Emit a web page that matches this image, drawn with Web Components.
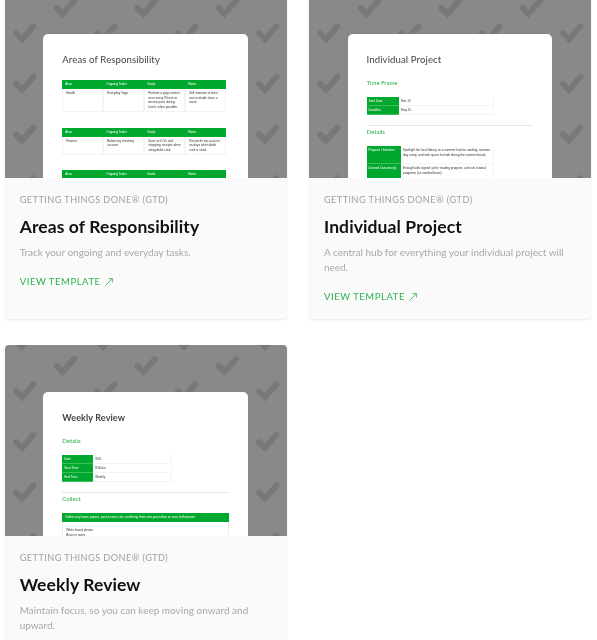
<!DOCTYPE html>
<html>
<head>
<meta charset="utf-8">
<title>Templates</title>
<style>
  html { overflow: hidden; }
  body { margin: 0; background: #fff; font-family: "Lato", "Liberation Sans", sans-serif; }
</style>
</head>
<body>
<template-grid>
  <template-card eyebrow="GETTING THINGS DONE® (GTD)" heading="Areas of Responsibility" text="Track your ongoing and everyday tasks.">
    <doc-sheet heading="Areas of Responsibility">
      <area-table style="margin-top:14px" cells="Health|Everyday Yoga|Perform a yoga stretch once every 90 min or do one pose during lunch, when possible.|Still maintain at least one in-studio class a week." height="23"></area-table>
      <area-table style="margin-top:15.500px" cells="Finance|Balancing checking account|Save as ICVs and shopping receipts when using debit card.|Reconcile my account on days when debit card is used." height="18"></area-table>
      <area-table style="margin-top:15px" cells="|||" height="10"></area-table>
    </doc-sheet>
  </template-card>
  <template-card eyebrow="GETTING THINGS DONE® (GTD)" heading="Individual Project" text="A central hub for everything your individual project will need.">
    <doc-sheet heading="Individual Project">
      <doc-heading style="margin-top:10.500px">Time Frame</doc-heading>
      <kv-table style="margin-top:9.500px" width="127" label="32.500" rows="Start Date|Mar 15;Deadline|May 15" row-height="9"></kv-table>
      <doc-rule style="margin-top:10px"></doc-rule>
      <doc-heading>Details</doc-heading>
      <kv-table style="margin-top:9px" width="127" label="34.500" rows="Purpose / Intention|Spotlight the local library as a summer hub for reading, summer day camp, and safe space for kids during the summer break.;Desired Outcome(s)|Enough kids signed up for reading program, art/craft, tutorial programs (as needed basis)" row-height="18"></kv-table>
    </doc-sheet>
  </template-card>
  <template-card eyebrow="GETTING THINGS DONE® (GTD)" heading="Weekly Review" text="Maintain focus, so you can keep moving onward and upward.">
    <doc-sheet heading="Weekly Review" bold>
      <doc-heading style="margin-top:10.500px">Details</doc-heading>
      <kv-table style="margin-top:9px" width="110" label="31" rows="Date|9/05;Start Time|8:30am;End Time|Weekly" row-height="9"></kv-table>
      <doc-rule style="margin-top:10.500px"></doc-rule>
      <doc-heading>Collect</doc-heading>
      <note-box style="margin-top:9px" title="Gather any loose papers, post-it notes, etc. and bring them into your inbox or scan to Evernote.">White board photos<br>Brain in notes</note-box>
    </doc-sheet>
  </template-card>
</template-grid>

<script>
class TemplateGrid extends HTMLElement {
  constructor() {
    super();
    this.attachShadow({ mode: 'open' });
    this.shadowRoot.innerHTML = `
      <style>
        :host {
          display: grid;
          grid-template-columns: 282px 282px;
          column-gap: 22.300px;
          row-gap: 26px;
          padding-left: 4.700px;
          margin-top: -13px;
        }
      </style>
      <slot></slot>
    `;
  }
}

class TemplateCard extends HTMLElement {
  constructor() {
    super();
    this.attachShadow({ mode: 'open' });
  }

  connectedCallback() {
    this.shadowRoot.innerHTML = `
      <style>
        :host {
          display: flex;
          flex-direction: column;
          height: 332px;
          background: #fafafa;
          border-radius: 4px;
          box-shadow: 0 1px 2px rgba(0, 0, 0, 0.1);
          overflow: hidden;
          font-family: "Lato", "Liberation Sans", sans-serif;
        }
        .thumb {
          position: relative;
          height: 191px;
          flex-shrink: 0;
          overflow: hidden;
          background: #88898b;
        }
        .blur {
          position: absolute;
          top: 0;
          left: 0;
          right: 0;
          bottom: 0;
          filter: blur(0.4px);
        }
        .blur svg {
          position: absolute;
          top: 0;
          left: 0;
          width: 100%;
          height: 100%;
        }
        .sheet-wrap {
          position: relative;
          padding: 47px 38.600px 0;
        }
        .body {
          padding: 15px 15px 0;
          filter: blur(0.3px);
        }
        .eyebrow {
          font-size: 9.200px;
          line-height: 14px;
          letter-spacing: 0.420px;
          color: #a0a0a0;
        }
        h2 {
          margin: 8px 0 0;
          font-size: 17.500px;
          line-height: 24px;
          font-weight: 700;
          color: #111;
          letter-spacing: 0.100px;
        }
        p {
          margin: 6px 0 0;
          font-size: 10px;
          line-height: 15px;
          color: #a8a8a8;
        }
        a {
          display: flex;
          align-items: center;
          gap: 4px;
          margin-top: 15px;
          font-size: 9.500px;
          line-height: 14px;
          letter-spacing: 0.550px;
          color: #2cb14c;
          text-decoration: none;
        }
      </style>
      <div class="thumb">
        <div class="blur">
          <svg aria-hidden="true">
            <defs>
              <pattern id="checks" width="81" height="50.600" patternUnits="userSpaceOnUse">
                <path d="M51.500 21l6 6L69 14" fill="none" stroke="#777879" stroke-width="6" stroke-linecap="round"/>
                <path d="M11 46.300l6 6L28.500 39.300M11 -4.300l6 6L28.500 -11.300" fill="none" stroke="#777879" stroke-width="6" stroke-linecap="round"/>
              </pattern>
            </defs>
            <rect width="100%" height="100%" fill="url(#checks)"/>
          </svg>
          <div class="sheet-wrap"><slot></slot></div>
        </div>
      </div>
      <div class="body">
        <div class="eyebrow">${this.getAttribute('eyebrow')}</div>
        <h2>${this.getAttribute('heading')}</h2>
        <p>${this.getAttribute('text')}</p>
        <a href="#">VIEW TEMPLATE
          <svg width="8" height="8" viewBox="0 0 8 8" fill="none" stroke="#2cb14c" stroke-width="0.800"><path d="M0.300 7.700L7.400 0.600M3.600 0.600h3.800v3.800"/></svg>
        </a>
      </div>
    `;
  }
}

class DocSheet extends HTMLElement {
  constructor() {
    super();
    this.attachShadow({ mode: 'open' });
  }

  connectedCallback() {
    const bold = this.hasAttribute('bold');
    this.shadowRoot.innerHTML = `
      <style>
        :host {
          display: block;
          height: 200px;
          padding: 19px 19px 0;
          box-sizing: border-box;
          background: #fff;
          border-radius: 5px;
          overflow: hidden;
        }
        .title {
          font-size: ${bold ? 9 : 9.6}px;
          line-height: 13px;
          font-weight: ${bold ? 700 : 400};
          letter-spacing: 0.100px;
          color: #444;
        }
      </style>
      <div class="title">${this.getAttribute('heading')}</div>
      <slot></slot>
    `;
  }
}

class DocHeading extends HTMLElement {
  constructor() {
    super();
    this.attachShadow({ mode: 'open' });
    this.shadowRoot.innerHTML = `
      <style>
        :host {
          display: block;
          font-size: 6px;
          line-height: 11px;
          color: #2cb14c;
        }
      </style>
      <slot></slot>
    `;
  }
}

class DocRule extends HTMLElement {
  constructor() {
    super();
    this.attachShadow({ mode: 'open' });
    this.shadowRoot.innerHTML = `
      <style>
        :host {
          display: block;
          height: 1px;
          background: #e6e6e6;
        }
      </style>
    `;
  }
}

class AreaTable extends HTMLElement {
  constructor() {
    super();
    this.attachShadow({ mode: 'open' });
  }

  connectedCallback() {
    const heads = ['Area', 'Ongoing Tasks', 'Goals', 'Notes'];
    const cells = this.getAttribute('cells').split('|');
    const h = this.getAttribute('height');
    this.shadowRoot.innerHTML = `
      <style>
        :host {
          display: grid;
          grid-template-columns: repeat(4, 41px);
          font-family: "Liberation Sans", sans-serif;
          font-size: 3.100px;
          line-height: 4.700px;
          color: #333;
        }
        .head {
          height: 9px;
          padding-left: 3px;
          background: #00a82d;
          color: #fff;
          line-height: 9px;
        }
        .cell {
          height: ${h}px;
          padding: 2px 3px;
          box-sizing: border-box;
          overflow: hidden;
          border: 1px solid #f4f4f4;
          border-top: 0;
        }
      </style>
      ${heads.map((t) => `<div class="head">${t}</div>`).join('')}
      ${cells.map((t) => `<div class="cell">${t}</div>`).join('')}
    `;
  }
}

class KvTable extends HTMLElement {
  constructor() {
    super();
    this.attachShadow({ mode: 'open' });
  }

  connectedCallback() {
    const w = this.getAttribute('width');
    const label = this.getAttribute('label');
    const rowH = this.getAttribute('row-height');
    const rows = this.getAttribute('rows').split(';').map((r) => r.split('|'));
    this.shadowRoot.innerHTML = `
      <style>
        :host {
          display: grid;
          grid-template-columns: ${label}px 1fr;
          width: ${w}px;
          font-family: "Liberation Sans", sans-serif;
          font-size: 3.100px;
          line-height: 4.700px;
          color: #333;
        }
        .k, .v {
          min-height: ${rowH}px;
          padding: 2px 2px 1px;
          box-sizing: border-box;
        }
        .k {
          background: #00a82d;
          color: #fff;
          white-space: nowrap;
          border-bottom: 0.500px solid #3cc05c;
        }
        .v {
          border: 1px solid #f4f4f4;
          border-left: 0;
          border-top: 0;
        }
      </style>
      ${rows.map(([k, v]) => `<div class="k">${k}</div><div class="v">${v}</div>`).join('')}
    `;
  }
}

class NoteBox extends HTMLElement {
  constructor() {
    super();
    this.attachShadow({ mode: 'open' });
  }

  connectedCallback() {
    this.shadowRoot.innerHTML = `
      <style>
        :host {
          display: block;
          font-family: "Liberation Sans", sans-serif;
          font-size: 3.100px;
          line-height: 4.700px;
          color: #333;
        }
        .bar {
          height: 9px;
          padding-left: 3px;
          background: #00a82d;
          color: #fff;
          line-height: 9px;
        }
        .box {
          height: 40px;
          padding: 6px 3px;
          box-sizing: border-box;
          border: 1px solid #eee;
          border-top: 0;
        }
      </style>
      <div class="bar">${this.getAttribute('title')}</div>
      <div class="box"><slot></slot></div>
    `;
  }
}

customElements.define('template-grid', TemplateGrid);
customElements.define('template-card', TemplateCard);
customElements.define('doc-sheet', DocSheet);
customElements.define('doc-heading', DocHeading);
customElements.define('doc-rule', DocRule);
customElements.define('area-table', AreaTable);
customElements.define('kv-table', KvTable);
customElements.define('note-box', NoteBox);
</script>
</body>
</html>
